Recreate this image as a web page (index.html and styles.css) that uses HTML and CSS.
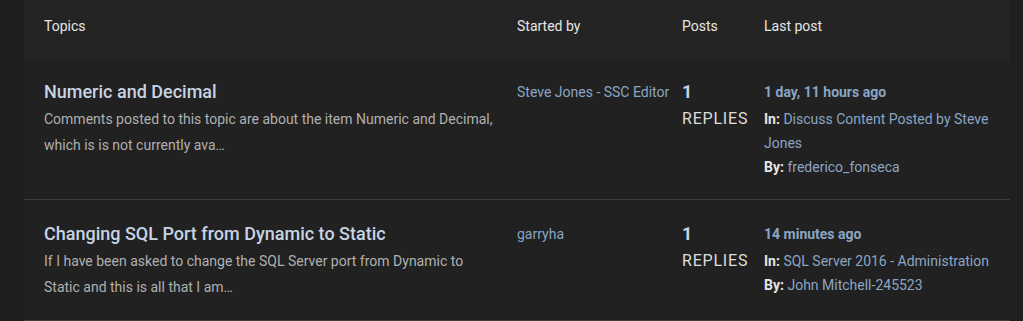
FILE: index.html
```html
<!doctype html>
<html lang="en">
  <head>
    <meta charset="UTF-8" />
    <title>Topics</title>
    <link rel="stylesheet" href="styles.css">
  </head>
  <body>
    <div class="topic-list">
      <div class="topic-head">
        <div>Topics</div>
        <div>Started by</div>
        <div>Posts</div>
        <div>Last post</div>
      </div>

      <div class="topic-row">
        <div class="topic-main">
          <a class="topic-title" href="#">Numeric and Decimal</a>
          <p class="topic-excerpt">
            Comments posted to this topic are about the item Numeric and Decimal,
            which is is not currently ava…
          </p>
        </div>
        <div class="topic-author"><a href="#">Steve Jones - SSC Editor</a></div>
        <div class="topic-posts">
          <span class="count">1</span>
          <span class="label">Replies</span>
        </div>
        <div class="topic-last">
          <a class="when" href="#">1 day, 11 hours ago</a>
          <div><b>In:</b> <a href="#">Discuss Content Posted by Steve Jones</a></div>
          <div><b>By:</b> <a href="#">frederico_fonseca</a></div>
        </div>
      </div>

      <div class="topic-row">
        <div class="topic-main">
          <a class="topic-title" href="#">Changing SQL Port from Dynamic to Static</a>
          <p class="topic-excerpt">
            If I have been asked to change the SQL Server port from Dynamic to
            Static and this is all that I am…
          </p>
        </div>
        <div class="topic-author"><a href="#">garryha</a></div>
        <div class="topic-posts">
          <span class="count">1</span>
          <span class="label">Replies</span>
        </div>
        <div class="topic-last">
          <a class="when" href="#">14 minutes ago</a>
          <div><b>In:</b> <a href="#">SQL Server 2016 - Administration</a></div>
          <div><b>By:</b> <a href="#">John Mitchell-245523</a></div>
        </div>
      </div>
    </div>
  </body>
</html>
```

FILE: styles.css
```css
body {
  background-color: #1f1f1f;
  margin: 0;
  font-family: Roboto, "Liberation Sans", Arial, sans-serif;
  color: #b3b3b3;
}
a {
  color: #8ba5c4;
  text-decoration: none;
}
.topic-list {
  margin: 0 13px 0 24px;
}
.topic-head,
.topic-row {
  display: grid;
  grid-template-columns: 473px 165px 82px 1fr;
  padding: 0 10px 0 20px;
}
.topic-head {
  background-color: #242424;
  color: #e6e6e6;
  font-size: 14px;
  line-height: 20px;
  padding-top: 16px;
  padding-bottom: 22px;
}
.topic-row {
  background-color: #212121;
  border-bottom: 1px solid #3d3d3d;
  padding-top: 20px;
  padding-bottom: 20px;
}
.topic-main {
  max-width: 455px;
}
.topic-title {
  display: block;
  color: #c6d4e3;
  font-size: 18px;
  font-weight: 500;
  line-height: 28px;
}
.topic-excerpt {
  margin: 0;
  font-size: 14px;
  line-height: 26px;
  color: #b0b0b0;
}
.topic-author {
  font-size: 14px;
  line-height: 29px;
}
.topic-posts {
  display: flex;
  flex-direction: column;
}
.topic-posts .count {
  color: #c6d4e3;
  font-size: 18px;
  font-weight: 700;
  line-height: 28px;
}
.topic-posts .label {
  color: #dedede;
  font-size: 16px;
  letter-spacing: 0.8px;
  line-height: 26px;
  text-transform: uppercase;
}
.topic-last {
  font-size: 14px;
  line-height: 24px;
}
.topic-last .when {
  display: block;
  font-size: 14px;
  font-weight: 700;
  line-height: 29px;
  color: #8ba5c4;
}
.topic-last b {
  color: #e6e6e6;
  font-weight: 700;
}
```
